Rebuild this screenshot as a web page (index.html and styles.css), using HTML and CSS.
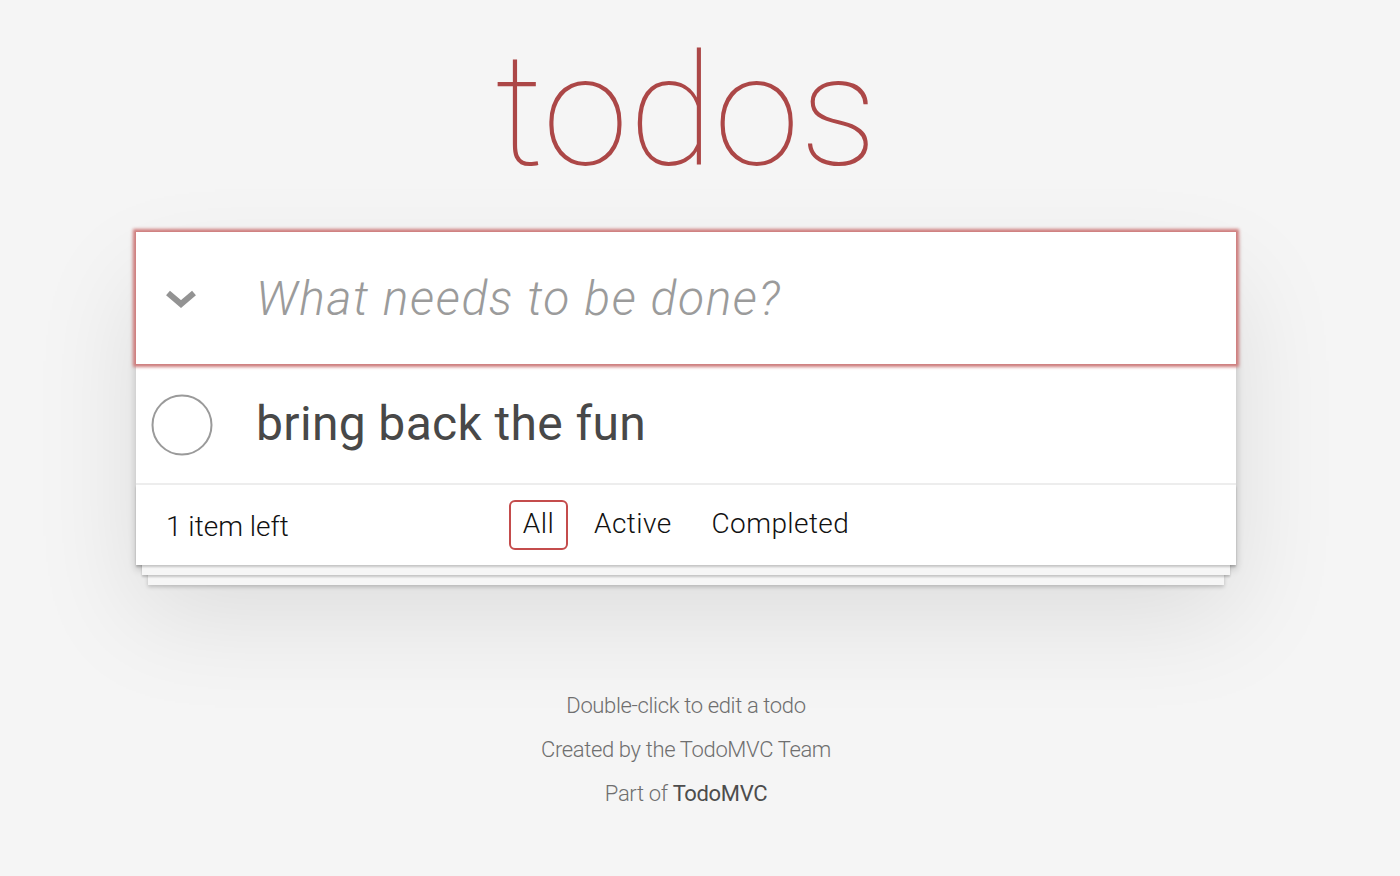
FILE: index.html
```html
<!DOCTYPE html>
<html lang="en">
<head>
<meta charset="utf-8">
<title>todos</title>
<link rel="stylesheet" href="styles.css">
</head>
<body>
<div class="page">
  <header class="header">
    <h1 class="title">todos</h1>
  </header>
  <section class="todoapp">
    <div class="new-row">
      <span class="toggle-all">
        <svg width="32" height="20" viewBox="0 0 32 20"><polyline points="3,4 16,15 29,4" fill="none" stroke="#939393" stroke-width="6"/></svg>
      </span>
      <input class="new-todo" type="text" placeholder="What needs to be done?">
    </div>
    <ul class="todo-list">
      <li class="todo">
        <span class="check">
          <svg width="62" height="62" viewBox="0 0 62 62"><circle cx="31" cy="31" r="29.5" fill="none" stroke="#9a9a9a" stroke-width="2"/></svg>
        </span>
        <label class="todo-label">bring back the fun</label>
      </li>
    </ul>
    <footer class="footer">
      <span class="count">1 item left</span>
      <ul class="filters">
        <li><a class="filter selected" href="#/">All</a></li>
        <li><a class="filter" href="#/active">Active</a></li>
        <li><a class="filter" href="#/completed">Completed</a></li>
      </ul>
      <span class="spacer"></span>
    </footer>
  </section>
  <footer class="info">
    <p>Double-click to edit a todo</p>
    <p>Created by the TodoMVC Team</p>
    <p>Part of <a class="info-link" href="#">TodoMVC</a></p>
  </footer>
</div>
</body>
</html>
```

FILE: styles.css
```css
* { box-sizing: border-box; }

html, body {
  margin: 0;
  padding: 0;
}

body {
  background: #f5f5f5;
  font-family: Roboto, "Helvetica Neue", "Liberation Sans", sans-serif;
  font-weight: 300;
  color: #4d4d4d;
  padding-right: 28px;
  height: 876px;
  overflow: hidden;
}

.page {
  width: 1100px;
  margin: 0 auto;
}

.header {
  padding-top: 33px;
}

.title {
  margin: 0;
  text-align: center;
  font-size: 156px;
  line-height: 156px;
  font-weight: 100;
  color: #ac4747;
  letter-spacing: 0;
}

.todoapp {
  margin-top: 43px;
  background: #fff;
  position: relative;
  box-shadow: 0 4px 8px 0 rgba(0, 0, 0, 0.2), 0 50px 100px 0 rgba(0, 0, 0, 0.1);
}

.new-row {
  display: flex;
  align-items: center;
  height: 132px;
  position: relative;
  z-index: 2;
  background: #fff;
  box-shadow: 0 0 3px 3px #cf7d7d;
}

.toggle-all {
  width: 120px;
  padding-left: 29px;
  display: flex;
  align-items: center;
  padding-top: 2px;
}

.new-todo {
  flex: 1;
  border: 0;
  outline: none;
  background: transparent;
  font-family: inherit;
  font-size: 48px;
  font-weight: 300;
  color: #4d4d4d;
  padding: 0 32px 0 0;
  height: 100%;
}

.new-todo::placeholder {
  font-style: italic;
  font-weight: 300;
  color: #9b9b9b;
  letter-spacing: 1.6px;
}

.todo-list {
  list-style: none;
  margin: 0;
  padding: 0;
  border-top: 2px solid #e6e6e6;
}

.todo {
  display: flex;
  align-items: center;
  height: 119px;
  border-bottom: 2px solid #ededed;
}

.check {
  width: 120px;
  padding-left: 15px;
  display: flex;
  align-items: center;
}

.todo-label {
  font-size: 48px;
  font-weight: 400;
  color: #484848;
  padding-bottom: 2px;
  letter-spacing: 0.35px;
}

.footer {
  display: grid;
  grid-template-columns: 1fr auto 1fr;
  align-items: center;
  height: 80px;
  padding: 0 30px;
  color: #111;
  font-size: 28px;
  background: #fff;
  position: relative;
  box-shadow:
    0 2px 2px rgba(0, 0, 0, 0.2),
    0 16px 0 -6px #f6f6f6,
    0 18px 2px -6px rgba(0, 0, 0, 0.2),
    0 32px 0 -12px #f6f6f6,
    0 34px 4px -12px rgba(0, 0, 0, 0.2);
}

.count {
  padding-top: 2px;
}

.filters {
  list-style: none;
  margin: 0;
  padding: 0;
  display: flex;
  letter-spacing: 0.4px;
}

.filter {
  display: block;
  margin: 6px;
  padding: 5px 12px 7px;
  border: 2px solid transparent;
  border-radius: 6px;
  color: inherit;
  text-decoration: none;
  line-height: 34px;
}

.filter.selected {
  border-color: #c44c4c;
}

.info {
  margin-top: 130px;
  text-align: center;
  color: #6f6f6f;
  font-size: 22px;
  display: flex;
  flex-direction: column;
  gap: 22px;
  letter-spacing: -0.35px;
}

.info p {
  margin: 0;
  line-height: 22px;
}

.info-link {
  color: #4d4d4d;
  font-weight: 400;
  text-decoration: none;
}
```
